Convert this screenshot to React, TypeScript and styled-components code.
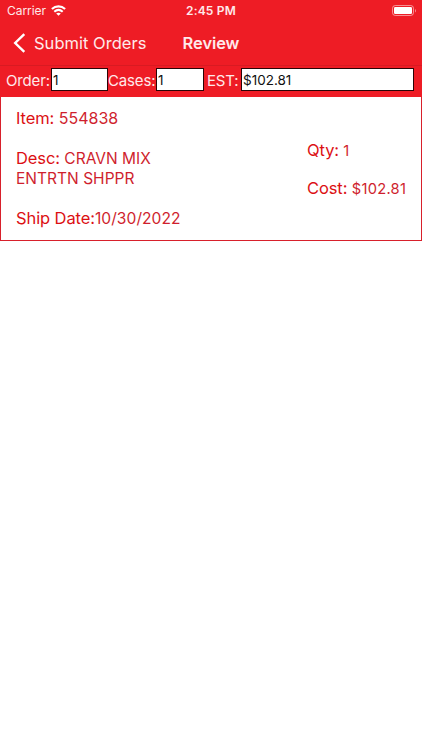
import React from "react";
import styled, { createGlobalStyle } from "styled-components";

const GlobalStyle = createGlobalStyle`
  * { box-sizing: border-box; }
  body { margin: 0; background: #fff; font-family: Inter, "Liberation Sans", sans-serif; }
`;

const Screen = styled.main`
  width: 422px;
  height: 750px;
  overflow: hidden;
  background: #fff;
`;

const StatusBar = styled.div`
  display: grid;
  grid-template-columns: 1fr auto 1fr;
  align-items: center;
  height: 22px;
  padding: 0 7px;
  background: #ee1c25;
  color: #fff;
  font-size: 12px;
  line-height: 22px;
`;

const Carrier = styled.div`
  display: flex;
  align-items: center;
  gap: 5px;
  letter-spacing: -0.05px;
  color: #ffe9ea;

  svg { margin-bottom: 2px; }
`;

const Clock = styled.div`
  font-weight: 600;
  letter-spacing: 0.2px;
  color: #ffe9ea;
`;

const BatterySlot = styled.div`
  display: flex;
  justify-content: flex-end;
  margin-right: -2px;
`;

const NavBar = styled.header`
  display: grid;
  grid-template-columns: 1fr auto 1fr;
  align-items: center;
  height: 44px;
  padding: 0 13px 2px;
  background: #ee1c25;
  border-bottom: 1px solid #d81a22;
  color: #ffe9ea;
`;

const BackButton = styled.button`
  display: flex;
  align-items: center;
  gap: 8px;
  padding: 0;
  border: 0;
  background: none;
  color: inherit;
  font: 400 16.5px/22px Inter, sans-serif;
  letter-spacing: 0.02px;
  white-space: nowrap;
`;

const Title = styled.h1`
  margin: 0;
  font-size: 16.5px;
  font-weight: 600;
  line-height: 22px;
  letter-spacing: -0.1px;
`;

const Summary = styled.section`
  display: flex;
  align-items: flex-start;
  height: 31px;
  padding: 2px 0 0 6px;
  background: #ee1c25;
`;

const SummaryLabel = styled.label<{ $width: number; $spacing?: number }>`
  width: ${(p) => p.$width}px;
  color: #ffe9ea;
  font-size: 15px;
  line-height: 25px;
  letter-spacing: ${(p) => p.$spacing ?? 0}px;
  white-space: nowrap;
`;

const Field = styled.input<{ $width: number; $gap?: number }>`
  width: ${(p) => p.$width}px;
  height: 23px;
  margin-right: ${(p) => p.$gap ?? 0}px;
  padding: 1px 1px 0;
  border: 1px solid #2a0507;
  border-radius: 0;
  background: #fff;
  color: #111;
  font: 400 13.5px/20px Inter, sans-serif;
  outline: none;
`;

const OrderCard = styled.article`
  display: grid;
  grid-template-columns: 291px 1fr;
  height: 144px;
  padding: 11px 0 0 15px;
  border: 1px solid #d8202b;
  border-top: 0;
  color: #cf1f2e;
`;

const Details = styled.div`
  display: flex;
  flex-direction: column;
  gap: 20px;
`;

const Amounts = styled.div`
  display: flex;
  flex-direction: column;
  gap: 18px;
  padding-top: 32px;
`;

const Entry = styled.p<{ $size: number; $spacing?: number; $height?: number }>`
  margin: 0;
  font-size: ${(p) => p.$size}px;
  line-height: ${(p) => p.$height ?? 20}px;
  letter-spacing: ${(p) => p.$spacing ?? 0}px;
  white-space: nowrap;
`;

const Key = styled.span`
  color: #dc1013;
  font-size: 16.5px;
  letter-spacing: -0.1px;
`;

const Wifi = () => (
  <svg width="15" height="11" viewBox="0 0 15 11" fill="none" stroke="#fff" strokeWidth="2.1">
    <path d="M.9 4.1C4.7.4 10.3.4 14.1 4.1" />
    <path d="M3.3 6.8c2.5-2.2 5.9-2.2 8.4 0" />
    <path d="M7.5 10.8 5.2 8.6c1.2-1.2 3.4-1.2 4.6 0z" fill="#fff" stroke="none" />
  </svg>
);

const Battery = () => (
  <svg width="25" height="12" viewBox="0 0 25 12">
    <rect x="0.5" y="0.5" width="21" height="10" rx="2.8" fill="none" stroke="#fff" strokeOpacity="0.5" />
    <rect x="2" y="2" width="18" height="7" rx="1.2" fill="#fff" />
    <path d="M23 4v3.4c1.3-.7 1.3-2.7 0-3.4z" fill="#fff" fillOpacity="0.5" />
  </svg>
);

const Chevron = () => (
  <svg width="13" height="20" viewBox="0 0 13 20" fill="none" stroke="#fff" strokeWidth="2.4">
    <path d="M11.3 1.2 2.2 10l9.1 8.8" />
  </svg>
);

export default function App() {
  return (
    <Screen>
      <GlobalStyle />
      <StatusBar>
        <Carrier>Carrier <Wifi /></Carrier>
        <Clock>2:45 PM</Clock>
        <BatterySlot><Battery /></BatterySlot>
      </StatusBar>
      <NavBar>
        <BackButton><Chevron />Submit Orders</BackButton>
        <Title>Review</Title>
      </NavBar>
      <Summary>
        <SummaryLabel $width={45} $spacing={-0.15}>Order:</SummaryLabel>
        <Field $width={57} aria-label="Order" defaultValue="1" />
        <SummaryLabel $width={48} $spacing={-0.15}>Cases:</SummaryLabel>
        <Field $width={48} $gap={3} aria-label="Cases" defaultValue="1" />
        <SummaryLabel $width={34} $spacing={-0.15}>EST:</SummaryLabel>
        <Field $width={173} aria-label="Estimate" defaultValue="$102.81" />
      </Summary>
      <OrderCard>
        <Details>
          <Entry $size={16}><Key>Item:</Key> 554838</Entry>
          <Entry $size={15.5} $spacing={0.02}><Key>Desc:</Key> CRAVN MIX<br />ENTRTN SHPPR</Entry>
          <Entry $size={15.6} $spacing={0.05} $height={18}><Key>Ship Date:</Key>10/30/2022</Entry>
        </Details>
        <Amounts>
          <Entry $size={14.7} $spacing={0.1}><Key>Qty:</Key> 1</Entry>
          <Entry $size={14.7} $spacing={0.27} $height={19}><Key>Cost:</Key> $102.81</Entry>
        </Amounts>
      </OrderCard>
    </Screen>
  );
}
